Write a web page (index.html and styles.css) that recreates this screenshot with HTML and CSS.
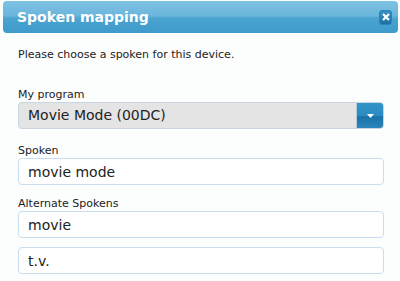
FILE: index.html
```html
<!DOCTYPE html>
<html lang="en">
  <head>
    <meta charset="UTF-8" />
    <title>Spoken mapping</title>
    <link rel="stylesheet" href="styles.css">
  </head>
  <body>
    <div class="dialog">
      <div class="titlebar">
        <span class="title">Spoken mapping</span>
        <button class="close" title="close">
          <svg width="8" height="8" viewBox="0 0 8 8">
            <path d="M1 1 L7 7 M7 1 L1 7" stroke="#fff" stroke-width="2.2" />
          </svg>
        </button>
      </div>
      <div class="content">
        <p class="intro">Please choose a spoken for this device.</p>
        <div class="field first">
          <label>My program</label>
          <div class="select">
            <span class="select-value">Movie Mode (00DC)</span>
            <span class="select-btn">
              <svg width="7" height="4" viewBox="0 0 7 4"><path d="M0 0 H7 L3.5 4 Z" fill="#fff" /></svg>
            </span>
          </div>
        </div>
        <div class="field">
          <label>Spoken</label>
          <input class="text" type="text" value="movie mode" />
        </div>
        <div class="field">
          <label>Alternate Spokens</label>
          <input class="text" type="text" value="movie" />
          <input class="text alt" type="text" value="t.v." />
        </div>
      </div>
    </div>
  </body>
</html>
```

FILE: styles.css
```css
body {
  margin: 0;
  padding: 0;
  background-color: #fcfdfd;
  font-family: "DejaVu Sans", Verdana, sans-serif;
}
.dialog {
  padding: 1px 2px 0 3px;
}
.titlebar {
  display: flex;
  align-items: center;
  justify-content: space-between;
  height: 32px;
  padding: 0 6px 0 14px;
  border-radius: 4px;
  background: linear-gradient(#7ec2e3 0%, #6bb6dc 45%, #4aa3d0 55%, #3e9bcb 100%);
}
.title {
  color: #ffffff;
  font-weight: bold;
  font-size: 14px;
}
.close {
  width: 13px;
  height: 15px;
  padding: 0;
  border: 1px solid #2b84b6;
  border-radius: 3px;
  background: linear-gradient(#3891c4, #1f6fa4);
  display: flex;
  align-items: center;
  justify-content: center;
}
.content {
  padding: 0 14px 0 15px;
}
.intro {
  margin: 15px 0 0 0;
  font-size: 11px;
  line-height: 13px;
  color: #222;
}
.field {
  display: flex;
  flex-direction: column;
  margin-top: 12px;
}
.field.first {
  margin-top: 27px;
}
label {
  font-size: 11px;
  line-height: 13px;
  color: #222;
  margin-bottom: 1px;
}
.select {
  display: flex;
  height: 25px;
  margin-bottom: 3px;
  border: 1px solid #c8d5e0;
  border-radius: 4px;
  background-color: #e4e4e4;
  overflow: hidden;
}
.select-value {
  flex: 1;
  padding-left: 9px;
  line-height: 25px;
  font-size: 14px;
  color: #222;
}
.select-btn {
  width: 26px;
  display: flex;
  align-items: center;
  justify-content: center;
  border-left: 1px solid #b8cbd9;
  background: linear-gradient(#3294c8 0%, #2a8cc2 50%, #1a72a8 55%, #2a86bd 100%);
}
.text {
  height: 25px;
  box-sizing: content-box;
  border: 1px solid #c8ddef;
  border-radius: 4px;
  background-color: #ffffff;
  padding: 0 9px;
  font-family: "DejaVu Sans", Verdana, sans-serif;
  font-size: 14px;
  color: #222;
  outline: none;
}
.text.alt {
  margin-top: 9px;
}
```
